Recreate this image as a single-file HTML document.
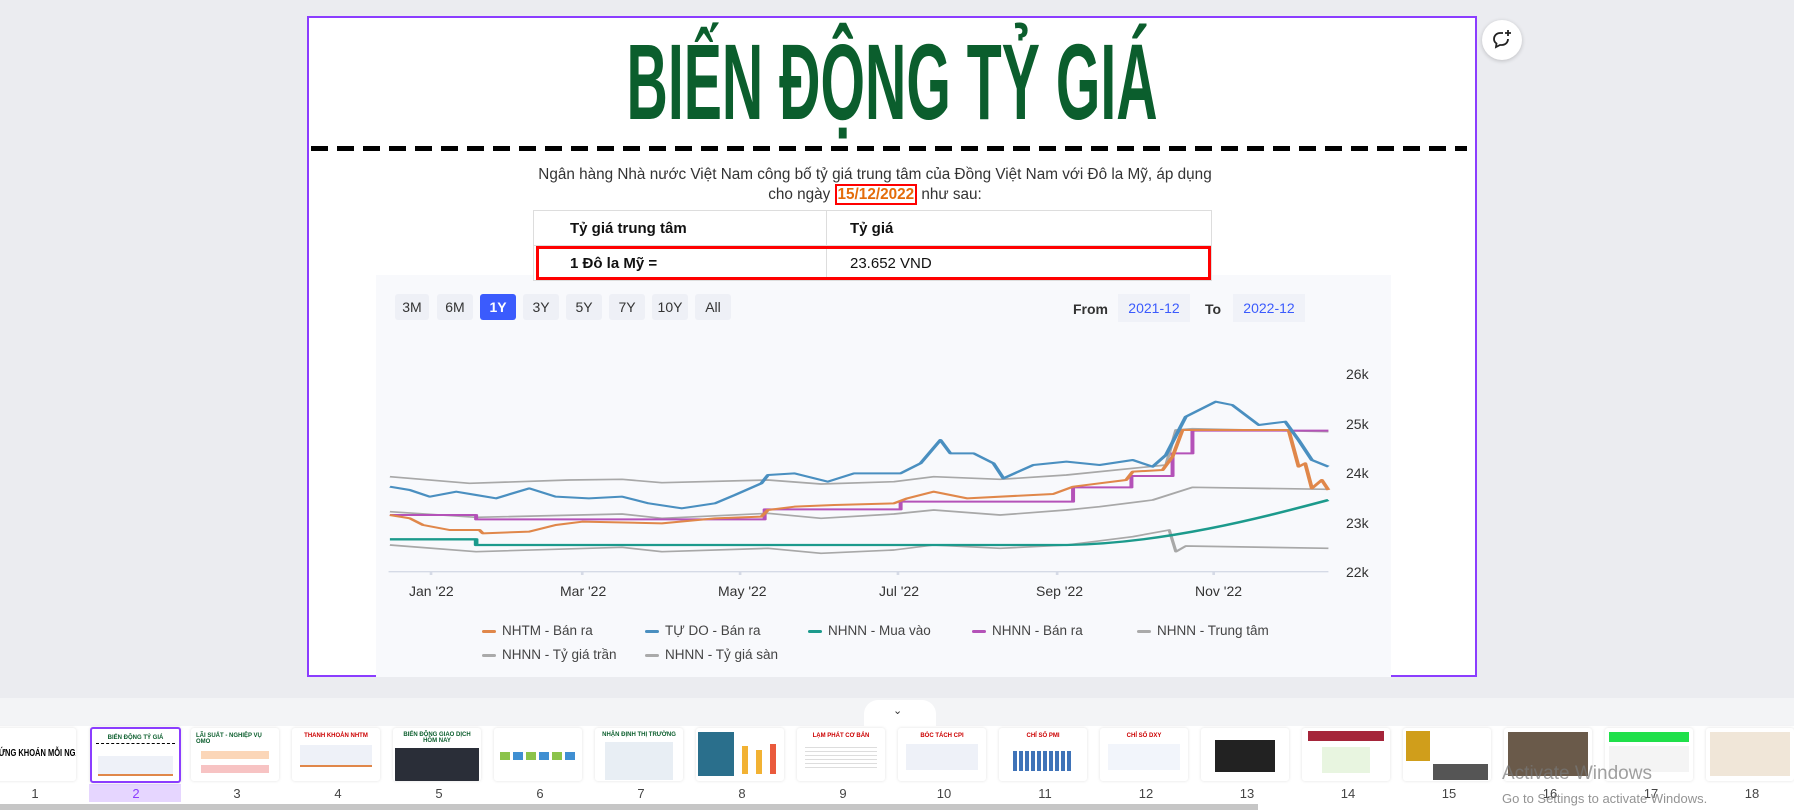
<!DOCTYPE html>
<html><head><meta charset="utf-8"><style>
*{margin:0;padding:0;box-sizing:border-box}
body{width:1794px;height:810px;background:#ebecf0;position:relative;overflow:hidden;font-family:"Liberation Sans",Arial,sans-serif}
.abs{position:absolute}
.slide{left:307px;top:16px;width:1170px;height:661px;background:#fff;border:2px solid #8b3dff}
.title{left:307px;top:28px;width:1170px;text-align:center;color:#0b5e2d;font-weight:bold;font-size:108px;line-height:108px;white-space:nowrap}
.title span{display:inline-block;transform:scaleX(0.53);transform-origin:center}
.dash{left:311px;top:146px;width:1156px;height:5px;background:repeating-linear-gradient(90deg,#000 0 17px,transparent 17px 26px)}
.para{left:480px;top:165px;width:790px;text-align:center;font-size:15.3px;line-height:20px;color:#333}
.date{color:#e46c0a;font-weight:bold;border:2px solid #f00;padding:0 1px}
table{position:absolute;left:533px;top:210px;width:679px;border-collapse:collapse;font-size:15px;color:#111;background:#fff}
td{border:1px solid #ddd;height:35px;padding-left:36px}
td+td{padding-left:23px}
.red{left:536px;top:246px;width:675px;height:34px;border:3px solid #f00}
.chart{left:376px;top:275px;width:1015px;height:402px;background:#f8f9fc}
.btn{top:294px;height:26px;background:#eef0f6;border-radius:3px;font-size:14px;color:#333;text-align:center;line-height:26px}
.lbl{font-size:14px;color:#333}
.leg{font-size:13.5px;color:#444;white-space:nowrap}
.leg i{display:inline-block;width:14px;height:3px;vertical-align:middle;margin-right:6px;border-radius:2px}
.thumb{top:728px;width:88px;height:53px;background:#fff;border-radius:3px;box-shadow:0 0 3px rgba(0,0,0,.12);overflow:hidden}
.num{top:786px;width:60px;text-align:center;font-size:13px;color:#444}
</style></head><body>
<div class="abs slide"></div>
<div class="abs title"><span>BIẾN ĐỘNG TỶ GIÁ</span></div>
<div class="abs dash"></div>
<div class="abs para">Ngân hàng Nhà nước Việt Nam công bố tỷ giá trung tâm của Đồng Việt Nam với Đô la Mỹ, áp dụng<br>cho ngày <span class="date">15/12/2022</span> như sau:</div>
<div class="abs chart"></div>
<table><tr><td style="font-weight:bold">Tỷ giá trung tâm</td><td style="font-weight:bold">Tỷ giá</td></tr>
<tr><td style="width:293px;font-weight:bold">1 Đô la Mỹ =</td><td>23.652 VND</td></tr></table>
<div class="abs red"></div>
<div class="abs btn" style="left:395px;width:34px">3M</div>
<div class="abs btn" style="left:437px;width:36px">6M</div>
<div class="abs btn" style="left:480px;width:36px;background:#3b5bfd;color:#fff;font-weight:bold">1Y</div>
<div class="abs btn" style="left:523px;width:36px">3Y</div>
<div class="abs btn" style="left:566px;width:36px">5Y</div>
<div class="abs btn" style="left:609px;width:36px">7Y</div>
<div class="abs btn" style="left:652px;width:36px">10Y</div>
<div class="abs btn" style="left:695px;width:36px">All</div>
<div class="abs lbl" style="left:1073px;top:301px;font-weight:bold">From</div>
<div class="abs lbl" style="left:1118px;top:294px;width:72px;height:28px;background:#f0f2f8;color:#3b5bfd;line-height:28px;text-align:center">2021-12</div>
<div class="abs lbl" style="left:1205px;top:301px;font-weight:bold">To</div>
<div class="abs lbl" style="left:1233px;top:294px;width:72px;height:28px;background:#f0f2f8;color:#3b5bfd;line-height:28px;text-align:center">2022-12</div>
<div class="abs lbl" style="left:1346px;top:366px">26k</div>
<div class="abs lbl" style="left:1346px;top:416px">25k</div>
<div class="abs lbl" style="left:1346px;top:465px">24k</div>
<div class="abs lbl" style="left:1346px;top:515px">23k</div>
<div class="abs lbl" style="left:1346px;top:564px">22k</div>
<div class="abs lbl" style="left:409px;top:583px">Jan '22</div>
<div class="abs lbl" style="left:560px;top:583px">Mar '22</div>
<div class="abs lbl" style="left:718px;top:583px">May '22</div>
<div class="abs lbl" style="left:879px;top:583px">Jul '22</div>
<div class="abs lbl" style="left:1036px;top:583px">Sep '22</div>
<div class="abs lbl" style="left:1195px;top:583px">Nov '22</div>
<svg class="abs" style="left:370px;top:270px" width="1040" height="400" viewBox="0 0 1568 1200" preserveAspectRatio="none" fill="none" stroke-linejoin="round">
<path d="M28 905H1445M92 905v10M320 905v10M558 905v10M796 905v10M1036 905v10M1272 905v10" stroke="#d5dae6" stroke-width="4"/>
<g stroke="#a8a8a8" stroke-width="5">
<path d="M30 620L150 640L300 630L380 628L440 638L600 630L680 642L790 635L850 620L950 628L1050 615L1150 595L1200 585L1215 480L1240 476L1445 485"/>
<path d="M30 725L160 742L380 732L440 745L600 730L680 745L790 732L850 720L950 735L1050 720L1100 710L1180 690L1240 652L1445 658"/>
<path d="M30 825L160 845L380 832L440 845L600 835L680 850L790 840L850 825L950 835L1050 825L1150 800L1205 780L1215 845L1230 828L1445 835"/>
</g>
<path d="M30 808H160V825H1050C1200 820 1350 740 1445 690" stroke="#1c9a8c" stroke-width="7"/>
<path d="M30 735H160V748H595V718H800V695H1060V652H1148V618H1210V550H1240V482H1445" stroke="#b452b8" stroke-width="6"/>
<path d="M30 735L60 745L80 765L120 780L165 780L170 790L240 785L280 765L320 755L440 760L520 745L590 740L600 720L640 710L700 705L790 700L810 685L850 665L900 685L1000 675L1030 672L1060 650L1100 640L1140 630L1150 605L1195 600L1210 560L1225 480L1385 480L1400 590L1410 580L1420 655L1435 630L1445 660" stroke="#e0874a" stroke-width="6"/>
<path d="M30 650L60 660L90 680L130 665L160 675L190 685L240 655L280 680L330 685L380 680L420 700L470 715L520 700L550 675L590 640L600 615L640 610L690 635L730 610L800 610L830 580L860 510L875 550L910 550L940 580L955 625L1000 585L1050 575L1100 585L1150 570L1180 590L1200 555L1230 440L1275 395L1300 405L1340 465L1380 455L1400 510L1420 570L1445 590" stroke="#4a8fc0" stroke-width="6"/>
</svg>
<div class="abs leg" style="left:482px;top:623px"><i style="background:#e0874a"></i>NHTM - Bán ra</div>
<div class="abs leg" style="left:645px;top:623px"><i style="background:#4a8fc0"></i>TỰ DO - Bán ra</div>
<div class="abs leg" style="left:808px;top:623px"><i style="background:#1c9a8c"></i>NHNN - Mua vào</div>
<div class="abs leg" style="left:972px;top:623px"><i style="background:#b452b8"></i>NHNN - Bán ra</div>
<div class="abs leg" style="left:1137px;top:623px"><i style="background:#aaa"></i>NHNN - Trung tâm</div>
<div class="abs leg" style="left:482px;top:647px"><i style="background:#aaa"></i>NHNN - Tỷ giá trần</div>
<div class="abs leg" style="left:645px;top:647px"><i style="background:#aaa"></i>NHNN - Tỷ giá sàn</div>
<div class="abs" style="left:1482px;top:20px;width:40px;height:40px;border-radius:50%;background:#fff;box-shadow:0 1px 4px rgba(0,0,0,.2)"></div>
<svg class="abs" style="left:1490px;top:28px" width="24" height="24" viewBox="0 0 24 24" fill="none" stroke="#222" stroke-width="1.8"><path d="M13 5H10a6 6 0 0 0-6 6c0 2 1 3.5 2.5 4.5L6 19l4-2h2a6 6 0 0 0 6-6"/><path d="M18 2v6M15 5h6"/></svg>
<div class="abs" style="left:0;top:698px;width:1794px;height:30px;background:#f3f4f6"></div>
<div class="abs" style="left:0;top:726px;width:1794px;height:84px;background:#fff"></div>
<div class="abs" style="left:864px;top:700px;width:72px;height:28px;background:#fff;border-radius:14px 14px 0 0"></div>
<div class="abs" style="left:893px;top:704px;font-size:11px;color:#333">⌄</div>
<div class="abs" style="left:89px;top:784px;width:92px;height:18px;background:#e6d6ff"></div>
<div class="abs thumb" style="left:-12px;"><div style="position:absolute;left:-30px;top:20px;width:120px;font-weight:bold;font-size:10px;white-space:nowrap;text-align:right;transform:scaleX(0.75);transform-origin:right">CHỨNG KHOÁN MỖI NGÀY</div></div>
<div class="abs thumb" style="left:90px;border:2px solid #8b3dff;width:91px;height:56px;top:727px"><div style="margin:6px 0 0;text-align:center;font-size:6px;color:#0b5e2d;font-weight:bold">BIẾN ĐỘNG TỶ GIÁ</div><div style="margin:2px 4px;border-top:1px dashed #000"></div><div style="margin:12px 6px 0;height:20px;background:#eef1f8;border-bottom:2px solid #e0874a"></div></div>
<div class="abs thumb" style="left:191px"><div style="margin:5px;font-size:6px;color:#0b5e2d;font-weight:bold">LÃI SUẤT - NGHIỆP VỤ OMO</div><div style="margin:6px 10px;height:8px;background:#fbd6b8"></div><div style="margin:4px 10px;height:8px;background:#f7c3c3"></div></div>
<div class="abs thumb" style="left:292px"><div style="margin:5px;font-size:6px;color:#c00;font-weight:bold;text-align:center">THANH KHOẢN NHTM</div><div style="margin:6px 8px;height:22px;background:#eef1f8;border-bottom:2px solid #e0874a"></div></div>
<div class="abs thumb" style="left:393px"><div style="margin:4px;font-size:6px;color:#0b5e2d;font-weight:bold;text-align:center">BIẾN ĐỘNG GIAO DỊCH HÔM NAY</div><div style="margin:0 2px;height:38px;background:#2a2e38"></div></div>
<div class="abs thumb" style="left:494px"><div style="margin:24px 6px;height:8px;background:repeating-linear-gradient(90deg,#8bc34a 0 10px,#fff 10px 13px,#3f8fd2 13px 23px,#fff 23px 26px)"></div></div>
<div class="abs thumb" style="left:595px"><div style="margin:4px;font-size:6px;color:#0b5e2d;font-weight:bold;text-align:center">NHẬN ĐỊNH THỊ TRƯỜNG</div><div style="margin:0 10px;height:38px;background:#e8eef4"></div></div>
<div class="abs thumb" style="left:696px"><div style="position:absolute;left:2px;top:4px;width:36px;height:44px;background:#2a6f8c"></div><div style="position:absolute;left:46px;top:18px;width:6px;height:28px;background:#f2b233"></div><div style="position:absolute;left:60px;top:22px;width:6px;height:24px;background:#f2b233"></div><div style="position:absolute;left:74px;top:16px;width:6px;height:30px;background:#ea5a3c"></div></div>
<div class="abs thumb" style="left:797px"><div style="margin:5px;font-size:6px;color:#c00;font-weight:bold;text-align:center">LẠM PHÁT CƠ BẢN</div><div style="margin:4px 8px;height:26px;background:repeating-linear-gradient(#fff 0 3px,#ddd 3px 4px)"></div></div>
<div class="abs thumb" style="left:898px"><div style="margin:5px;font-size:6px;color:#c00;font-weight:bold;text-align:center">BÓC TÁCH CPI</div><div style="margin:4px 8px;height:26px;background:#eef1f8"></div></div>
<div class="abs thumb" style="left:999px"><div style="margin:5px;font-size:6px;color:#c00;font-weight:bold;text-align:center">CHỈ SỐ PMI</div><div style="margin:12px 14px 0;height:20px;background:repeating-linear-gradient(90deg,#3f73b8 0 4px,#fff 4px 6px)"></div></div>
<div class="abs thumb" style="left:1100px"><div style="margin:5px;font-size:6px;color:#c00;font-weight:bold;text-align:center">CHỈ SỐ DXY</div><div style="margin:4px 8px;height:26px;background:#f2f5fb"></div></div>
<div class="abs thumb" style="left:1201px"><div style="margin:12px 14px;height:32px;background:#222"></div></div>
<div class="abs thumb" style="left:1302px"><div style="margin:3px 6px;height:10px;background:#a5253a"></div><div style="margin:6px 20px;height:26px;background:#e8f5e0"></div></div>
<div class="abs thumb" style="left:1403px"><div style="margin:3px;width:24px;height:30px;background:#d09e1b"></div><div style="margin:0 3px 0 30px;height:16px;background:#555"></div></div>
<div class="abs thumb" style="left:1504px"><div style="margin:4px;height:44px;background:#6a5a4a"></div></div>
<div class="abs thumb" style="left:1605px"><div style="margin:4px;height:10px;background:#1fe04a"></div><div style="margin:4px;height:26px;background:#f4f4f4"></div></div>
<div class="abs thumb" style="left:1706px"><div style="margin:4px;height:44px;background:#f0e6d8"></div></div>
<div class="abs num" style="left:5px">1</div><div class="abs num" style="left:106px;color:#8b3dff">2</div>
<div class="abs num" style="left:207px">3</div><div class="abs num" style="left:308px">4</div><div class="abs num" style="left:409px">5</div><div class="abs num" style="left:510px">6</div><div class="abs num" style="left:611px">7</div><div class="abs num" style="left:712px">8</div><div class="abs num" style="left:813px">9</div><div class="abs num" style="left:914px">10</div><div class="abs num" style="left:1015px">11</div><div class="abs num" style="left:1116px">12</div><div class="abs num" style="left:1217px">13</div><div class="abs num" style="left:1318px">14</div><div class="abs num" style="left:1419px">15</div><div class="abs num" style="left:1520px">16</div><div class="abs num" style="left:1621px">17</div><div class="abs num" style="left:1722px">18</div>
<div class="abs" style="left:1502px;top:763px;font-size:19px;color:rgba(120,120,120,.7)">Activate Windows</div>
<div class="abs" style="left:1502px;top:791px;font-size:13px;color:rgba(120,120,120,.8)">Go to Settings to activate Windows.</div>
<div class="abs" style="left:0;top:804px;width:1258px;height:6px;background:#c6c6c6"></div>
</body></html>
